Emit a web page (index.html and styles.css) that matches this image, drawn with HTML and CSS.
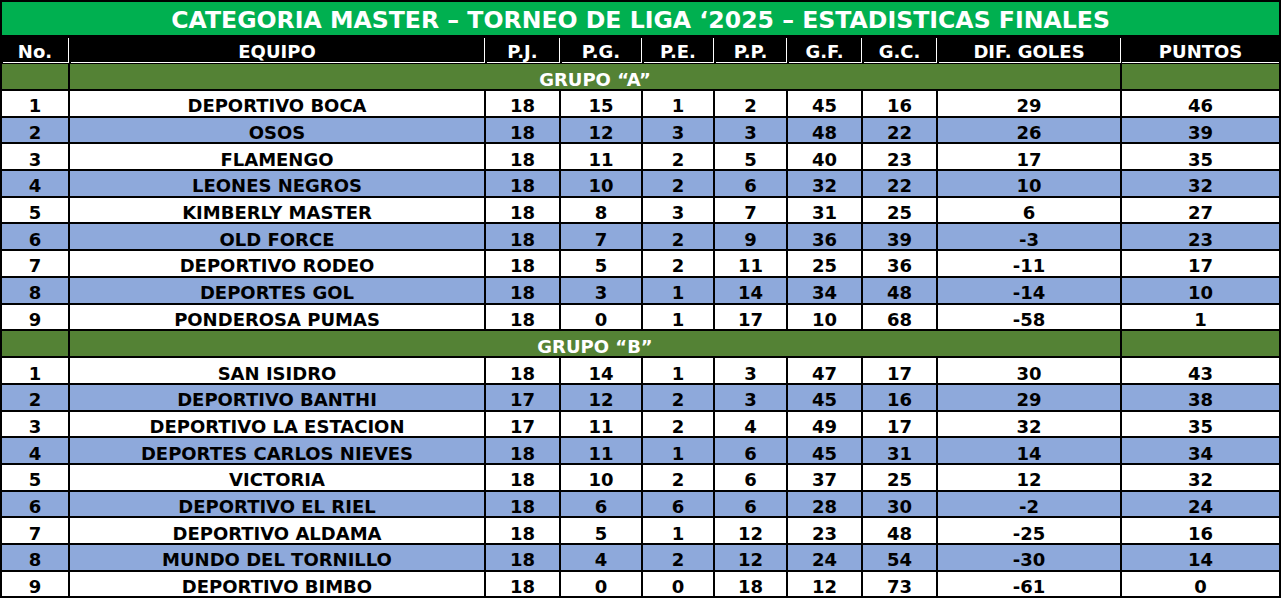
FILE: index.html
```html
<!DOCTYPE html>
<html lang="es">
<head>
<meta charset="utf-8">
<title>Categoria Master – Torneo de Liga 2025</title>
<link rel="stylesheet" href="styles.css">
</head>
<body>
<table class="standings">
  <colgroup>
    <col class="c-no"><col class="c-team"><col class="c-pj"><col class="c-pg"><col class="c-pe">
    <col class="c-pp"><col class="c-gf"><col class="c-gc"><col class="c-dif"><col class="c-pts">
  </colgroup>
  <thead>
    <tr class="title-row"><th colspan="10">CATEGORIA MASTER – TORNEO DE LIGA ‘2025 – ESTADISTICAS FINALES</th></tr>
    <tr class="head-row">
      <th>No.</th><th>EQUIPO</th><th>P.J.</th><th>P.G.</th><th>P.E.</th><th>P.P.</th><th>G.F.</th><th>G.C.</th><th>DIF. GOLES</th><th>PUNTOS</th>
    </tr>
  </thead>
  <tbody>
    <tr class="group-row"><td></td><td colspan="8">GRUPO “A”</td><td></td></tr>
    <tr><td>1</td><td>DEPORTIVO BOCA</td><td>18</td><td>15</td><td>1</td><td>2</td><td>45</td><td>16</td><td>29</td><td>46</td></tr>
    <tr class="alt"><td>2</td><td>OSOS</td><td>18</td><td>12</td><td>3</td><td>3</td><td>48</td><td>22</td><td>26</td><td>39</td></tr>
    <tr><td>3</td><td>FLAMENGO</td><td>18</td><td>11</td><td>2</td><td>5</td><td>40</td><td>23</td><td>17</td><td>35</td></tr>
    <tr class="alt"><td>4</td><td>LEONES NEGROS</td><td>18</td><td>10</td><td>2</td><td>6</td><td>32</td><td>22</td><td>10</td><td>32</td></tr>
    <tr><td>5</td><td>KIMBERLY MASTER</td><td>18</td><td>8</td><td>3</td><td>7</td><td>31</td><td>25</td><td>6</td><td>27</td></tr>
    <tr class="alt"><td>6</td><td>OLD FORCE</td><td>18</td><td>7</td><td>2</td><td>9</td><td>36</td><td>39</td><td>-3</td><td>23</td></tr>
    <tr><td>7</td><td>DEPORTIVO RODEO</td><td>18</td><td>5</td><td>2</td><td>11</td><td>25</td><td>36</td><td>-11</td><td>17</td></tr>
    <tr class="alt"><td>8</td><td>DEPORTES GOL</td><td>18</td><td>3</td><td>1</td><td>14</td><td>34</td><td>48</td><td>-14</td><td>10</td></tr>
    <tr><td>9</td><td>PONDEROSA PUMAS</td><td>18</td><td>0</td><td>1</td><td>17</td><td>10</td><td>68</td><td>-58</td><td>1</td></tr>
    <tr class="group-row"><td></td><td colspan="8">GRUPO “B”</td><td></td></tr>
    <tr><td>1</td><td>SAN ISIDRO</td><td>18</td><td>14</td><td>1</td><td>3</td><td>47</td><td>17</td><td>30</td><td>43</td></tr>
    <tr class="alt"><td>2</td><td>DEPORTIVO BANTHI</td><td>17</td><td>12</td><td>2</td><td>3</td><td>45</td><td>16</td><td>29</td><td>38</td></tr>
    <tr><td>3</td><td>DEPORTIVO LA ESTACION</td><td>17</td><td>11</td><td>2</td><td>4</td><td>49</td><td>17</td><td>32</td><td>35</td></tr>
    <tr class="alt"><td>4</td><td>DEPORTES CARLOS NIEVES</td><td>18</td><td>11</td><td>1</td><td>6</td><td>45</td><td>31</td><td>14</td><td>34</td></tr>
    <tr><td>5</td><td>VICTORIA</td><td>18</td><td>10</td><td>2</td><td>6</td><td>37</td><td>25</td><td>12</td><td>32</td></tr>
    <tr class="alt"><td>6</td><td>DEPORTIVO EL RIEL</td><td>18</td><td>6</td><td>6</td><td>6</td><td>28</td><td>30</td><td>-2</td><td>24</td></tr>
    <tr><td>7</td><td>DEPORTIVO ALDAMA</td><td>18</td><td>5</td><td>1</td><td>12</td><td>23</td><td>48</td><td>-25</td><td>16</td></tr>
    <tr class="alt"><td>8</td><td>MUNDO DEL TORNILLO</td><td>18</td><td>4</td><td>2</td><td>12</td><td>24</td><td>54</td><td>-30</td><td>14</td></tr>
    <tr><td>9</td><td>DEPORTIVO BIMBO</td><td>18</td><td>0</td><td>0</td><td>18</td><td>12</td><td>73</td><td>-61</td><td>0</td></tr>
  </tbody>
</table>
</body>
</html>
```
FILE: styles.css
```css
html, body {
  margin: 0;
  padding: 0;
  background: #ffffff;
}

.standings {
  width: 1281px;
  table-layout: fixed;
  border-collapse: separate;
  border-spacing: 2px;
  background: #000000;
  font-family: "DejaVu Sans", "Liberation Sans", sans-serif;
  font-weight: bold;
  font-size: 18px;
  color: #000000;
}

.c-no { width: 66px; }
.c-team { width: 414px; }
.c-pj { width: 73px; }
.c-pg { width: 80px; }
.c-pe { width: 70px; }
.c-pp { width: 71px; }
.c-gf { width: 73px; }
.c-gc { width: 73px; }
.c-dif { width: 182px; }
.c-pts { width: 157px; }

.standings th,
.standings td {
  padding: 0;
  text-align: center;
  vertical-align: middle;
  white-space: nowrap;
  line-height: 1;
}

.title-row { height: 33px; }
.title-row th {
  background: #00b050;
  color: #ffffff;
  font-size: 23.6px;
  padding-top: 5px;
}

.head-row { height: 25px; }
.head-row th {
  background: #000000;
  color: #ffffff;
  font-size: 18px;
  padding-top: 4px;
  box-shadow: 1px 1px 0 #ffffff;
}
.head-row th:last-child {
  box-shadow: 0 1px 0 #ffffff;
}

.standings tbody tr { height: 24.7px; }
.standings tbody td {
  background: #ffffff;
  padding-top: 6px;
}
.standings tbody tr.alt td { background: #8ea9db; }

.standings tbody tr.group-row { height: 25px; }
.standings tbody tr.group-row td {
  background: #548235;
  color: #ffffff;
}
```
